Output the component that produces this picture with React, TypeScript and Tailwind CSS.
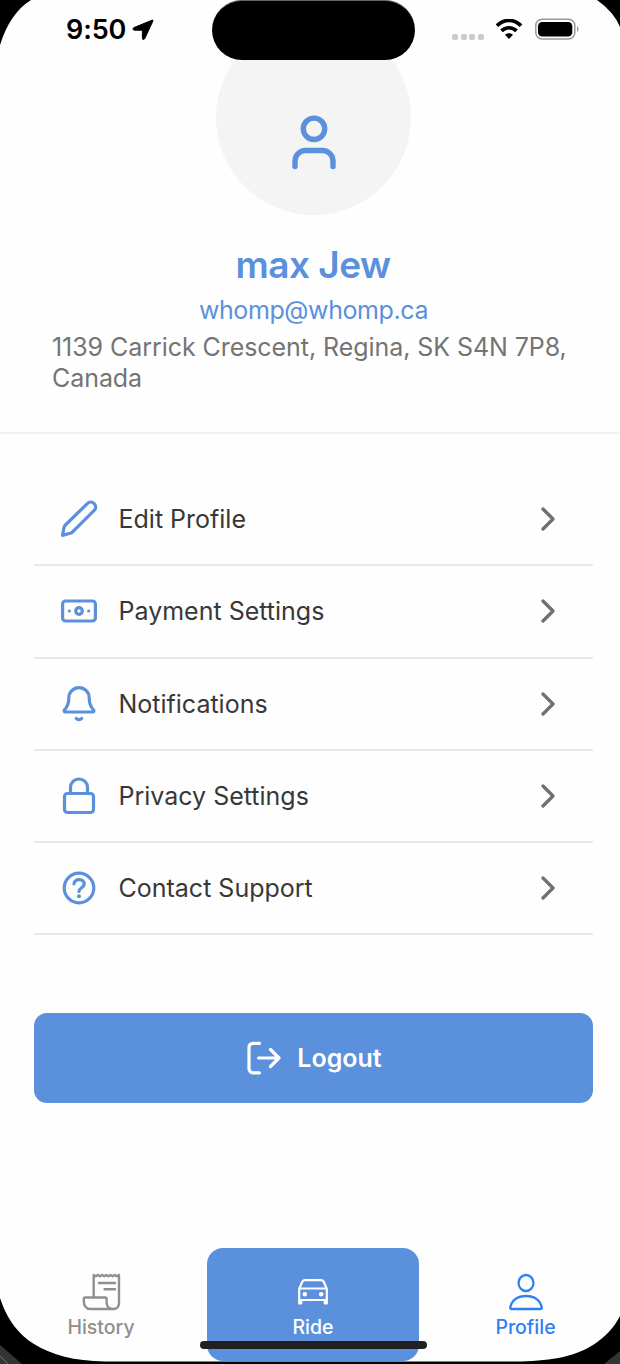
import React from "react";

type P = { children: React.ReactNode; className?: string; box: string; sw?: number };

function Icon({ children, className = "", box, sw = 3.2 }: P) {
  return (
    <svg viewBox={box} fill="none" stroke="currentColor" strokeWidth={sw} strokeLinecap="round" strokeLinejoin="round" className={`shrink-0 ${className}`}>
      {children}
    </svg>
  );
}

const menu = [
  {
    label: "Edit Profile",
    icon: <path d="M3.5 36.4 5 28.6C5.2 27.6 5.7 26.7 6.4 26L28.3 4.6A4.7 4.7 0 0 1 35.2 11.4L13.6 32.8C12.900 33.5 12.1 34 11.1 34.3Z" />,
  },
  {
    label: "Payment Settings",
    icon: (
      <>
        <rect x="3.6" y="10" width="32.8" height="20" rx="3" />
        <circle cx="20" cy="20" r="3.3" />
        <path d="M10.3 20h.02M29.7 20h.02" />
      </>
    ),
  },
  {
    label: "Notifications",
    icon: <path d="M9.8 13.8a10.2 10.2 0 0 1 20.4 0c0 7.500 2.200 10 4.3 12 .9.9.3 2.200-1 2.200H6.500c-1.3 0-1.900-1.3-1-2.200 2.100-2 4.3-4.500 4.3-12M17.300 34.500c1.400 1.600 4 1.600 5.400 0" />,
  },
  {
    label: "Privacy Settings",
    icon: <path d="M8.5 17.5h23a3 3 0 0 1 3 3v13a3 3 0 0 1-3 3h-23a3 3 0 0 1-3-3v-13a3 3 0 0 1 3-3M11.5 17.5v-6a8.500 8.500 0 0 1 17 0v6" />,
  },
  {
    label: "Contact Support",
    icon: (
      <>
        <circle cx="20" cy="20" r="14.800" />
        <path d="M15 15.800c.4-5.800 10.400-5.400 10.200.3-.1 3.500-5.200 3.900-5.200 7.400" />
        <circle cx="20" cy="28.300" r="2" fill="currentColor" stroke="none" />
      </>
    ),
  },
];

function StatusBar() {
  return (
    <div className="absolute inset-x-0 top-0 flex h-[60px] items-start">
      <span className="ml-[66px] mt-[13px] w-[61px] whitespace-nowrap text-[27px] leading-[34px] font-semibold tracking-[-0.1px] text-black">9:50</span>
      <svg viewBox="0 0 22 22" className="ml-[5px] mt-[19px] h-[22px] w-[22px]" stroke="black" strokeWidth="1" strokeLinejoin="round">
        <path d="M20 1.200 2 8.600C.4 9.400.8 11.200 2.400 11.200H10.400V19.200C10.400 20.900 12 21.100 12.800 19.500L20.900 2C21.300 1.200 20.800.9 20 1.200Z" />
      </svg>
      <div className="ml-[58px] h-[60px] w-[203px] rounded-full border-t border-[#666] bg-black" />
      <div className="ml-[37px] mt-[33.5px] flex gap-[2.7px]">
        {[0, 1, 2, 3].map((i) => (
          <i key={i} className="h-[6px] w-[6px] rounded-[2px] bg-[#cbcbcb]" />
        ))}
      </div>
      <svg viewBox="0 0 28 21" className="ml-[11px] mt-[19px] h-[21px] w-[28px]">
        <path d="M2 6.800C8.800-.3 19.200-.3 26 6.800M6.500 11.800c4.500-4.100 10.500-4.100 15 0" fill="none" stroke="black" strokeWidth="3.700" />
        <path d="m14 20-4-4.200c2.300-2 5.700-2 8 0Z" />
      </svg>
      <svg viewBox="0 0 44 22" className="ml-[12px] mt-[18px] h-[22px] w-[44px]">
        <rect x=".8" y="1.200" width="39" height="19.800" rx="6.300" fill="none" stroke="#999" strokeWidth="1.500" />
        <rect x="3" y="4" width="34.300" height="14.500" rx="4.300" />
        <path d="M42 8v6c2-1 2-5 0-6" fill="#999" />
      </svg>
    </div>
  );
}

export default function App() {
  return (
    <main className="relative flex h-[1364px] w-[620px] flex-col overflow-hidden bg-[#fefefe] font-['Inter',sans-serif]">
      <header className="flex h-[434px] shrink-0 flex-col items-center border-b-2 border-[#f2f2f2] pt-[20px]">
        <div className="ml-[7px] flex h-[195px] w-[195px] shrink-0 justify-center rounded-full bg-[#f4f4f4] pt-[92px]">
          <Icon box="0 0 48 60" sw={5.4} className="h-[60px] w-[48px] text-[#5b90dd]">
            <circle cx="24" cy="16.800" r="10.700" />
            <path d="M5 54.500V49A10.500 10.500 0 0 1 15.500 38.500h17A10.500 10.500 0 0 1 43 49v5.500" />
          </Icon>
        </div>
        <h1 className="ml-[6px] mt-[27px] whitespace-nowrap text-[37px] leading-[46px] font-semibold tracking-[-0.55px] text-[#5b90dd]">max Jew</h1>
        <p className="ml-[7px] mt-[6px] whitespace-nowrap text-[25px] leading-[32px] tracking-[-0.4px] text-[#5b90dd]">whomp@whomp.ca</p>
        <p className="mt-[6px] w-[516px] whitespace-nowrap text-[25px] leading-[31px] tracking-[-0.06px] text-[#747474]">
          1139 Carrick Crescent, Regina, SK S4N 7P8,
          <br />
          Canada
        </p>
      </header>

      <nav className="mt-[40px] ml-[34px] w-[559px] shrink-0">
        {menu.map((item) => (
          <div key={item.label} className="flex h-[92.3px] items-center border-b-2 border-[#e8e8e8] pl-[25px]">
            <Icon box="0 0 40 40" className="h-[40px] w-[40px] text-[#5b90dd]">{item.icon}</Icon>
            <span className="ml-[19.5px] flex-1 text-[25px] leading-[32px] text-[#383838]">{item.label}</span>
            <Icon box="0 0 16 24" sw={3.300} className="mr-[37px] h-[24px] w-[16px] text-[#707070]">
              <path d="m3 2 10 10L3 22" />
            </Icon>
          </div>
        ))}
      </nav>

      <button className="mt-[77.5px] ml-[34px] flex h-[90px] w-[559px] shrink-0 items-center justify-center rounded-[13px] bg-[#5b90dd] pl-[1px] text-white">
        <Icon box="0 0 36 36" className="h-[36px] w-[36px]">
          <path d="M13.500 3.300H7a4 4 0 0 0-4 4v21.500a4 4 0 0 0 4 4h6.500M12.500 18H33M24.500 9.500 33 18l-8.500 8.500" />
        </Icon>
        <span className="ml-[15px] text-[25px] leading-[32px] font-semibold">Logout</span>
      </button>

      <footer className="mt-[145px] flex h-[116px] shrink-0 items-start">
        <div className="flex w-[207px] flex-col items-center pt-[24px] text-[#8f8f8f]">
          <Icon box="0 0 40 40" sw={2.4} className="ml-[-5px] h-[40px] w-[40px]">
            <path d="M12.700 25.500V3l2.100 1.300L16.900 3 19 4.300 21.100 3l2.100 1.300L25.300 3l2.100 1.300L29.500 3l2.100 1.300L33.700 3l2.100 1.300L38 3V31c0 3.500-2.400 6-5.500 6H9.500C5 37 2.800 33.500 2.800 29v-2c0-1 .5-1.500 1.500-1.500h19.800c1 0 1.500.5 1.500 1.500v3.500c0 4 2.900 6.500 6.900 6.500M18 11h16M23.500 17.300H34" />
          </Icon>
          <span className="mt-[2px] ml-[-5px] text-[19.5px] leading-[26px] font-medium">History</span>
        </div>
        <div className="flex h-[113.500px] w-[212px] flex-col items-center rounded-[16px] bg-[#5b90dd] pt-[28px] text-white">
          <Icon box="0 0 34 30" sw={2.200} className="h-[30px] w-[34px]">
            <path d="M3.200 12.800 6.300 5.800C6.900 4.600 7.700 4.100 9 4.100h16c1.300 0 2.100.5 2.700 1.700l3.100 7v14.600h-2V24H5.200v3.400h-2ZM3.800 12.500h26.400" />
            <circle cx="8.800" cy="18.300" r="1.200" fill="currentColor" />
            <circle cx="25.200" cy="18.300" r="1.200" fill="currentColor" />
          </Icon>
          <span className="mt-[8px] text-[19.5px] leading-[26px] font-medium">Ride</span>
        </div>
        <div className="flex w-[201px] flex-col items-center pt-[24px] pl-[12px] text-[#2e80f7]">
          <Icon box="0 0 40 40" sw={2.300} className="h-[40px] w-[40px]">
            <ellipse cx="20" cy="11" rx="7.500" ry="8" />
            <path d="M5.200 37h29.600c.8 0 1.200-.5 1-1.400C34.300 28.200 28.200 24 20 24S5.700 28.200 4.200 35.600c-.2.9.2 1.400 1 1.400Z" />
          </Icon>
          <span className="mt-[2px] text-[19.5px] leading-[26px] font-medium">Profile</span>
        </div>
      </footer>

      <StatusBar />
      <svg viewBox="0 0 620 1364" className="pointer-events-none absolute inset-0 h-full w-full">
        <path d="M0 0H31Q10 13 0 45ZM597 0H620V27Q614 12 597 0Z" />
        <path d="M0 1298C8 1322 20 1335 34 1344C52 1355 74 1361 105 1361.500H515C548 1361 572 1358 593 1345C605 1337 614 1328 620 1316V1364H0Z" />
        <path d="M0 1345 22 1364H0ZM620 1351V1364H604Z" fill="#343434" />
        <path d="m0 1356 8 8" stroke="#777" />
      </svg>
      <div className="absolute left-[200px] top-[1341px] h-[8px] w-[227px] rounded-full bg-[#202020]" />
    </main>
  );
}
